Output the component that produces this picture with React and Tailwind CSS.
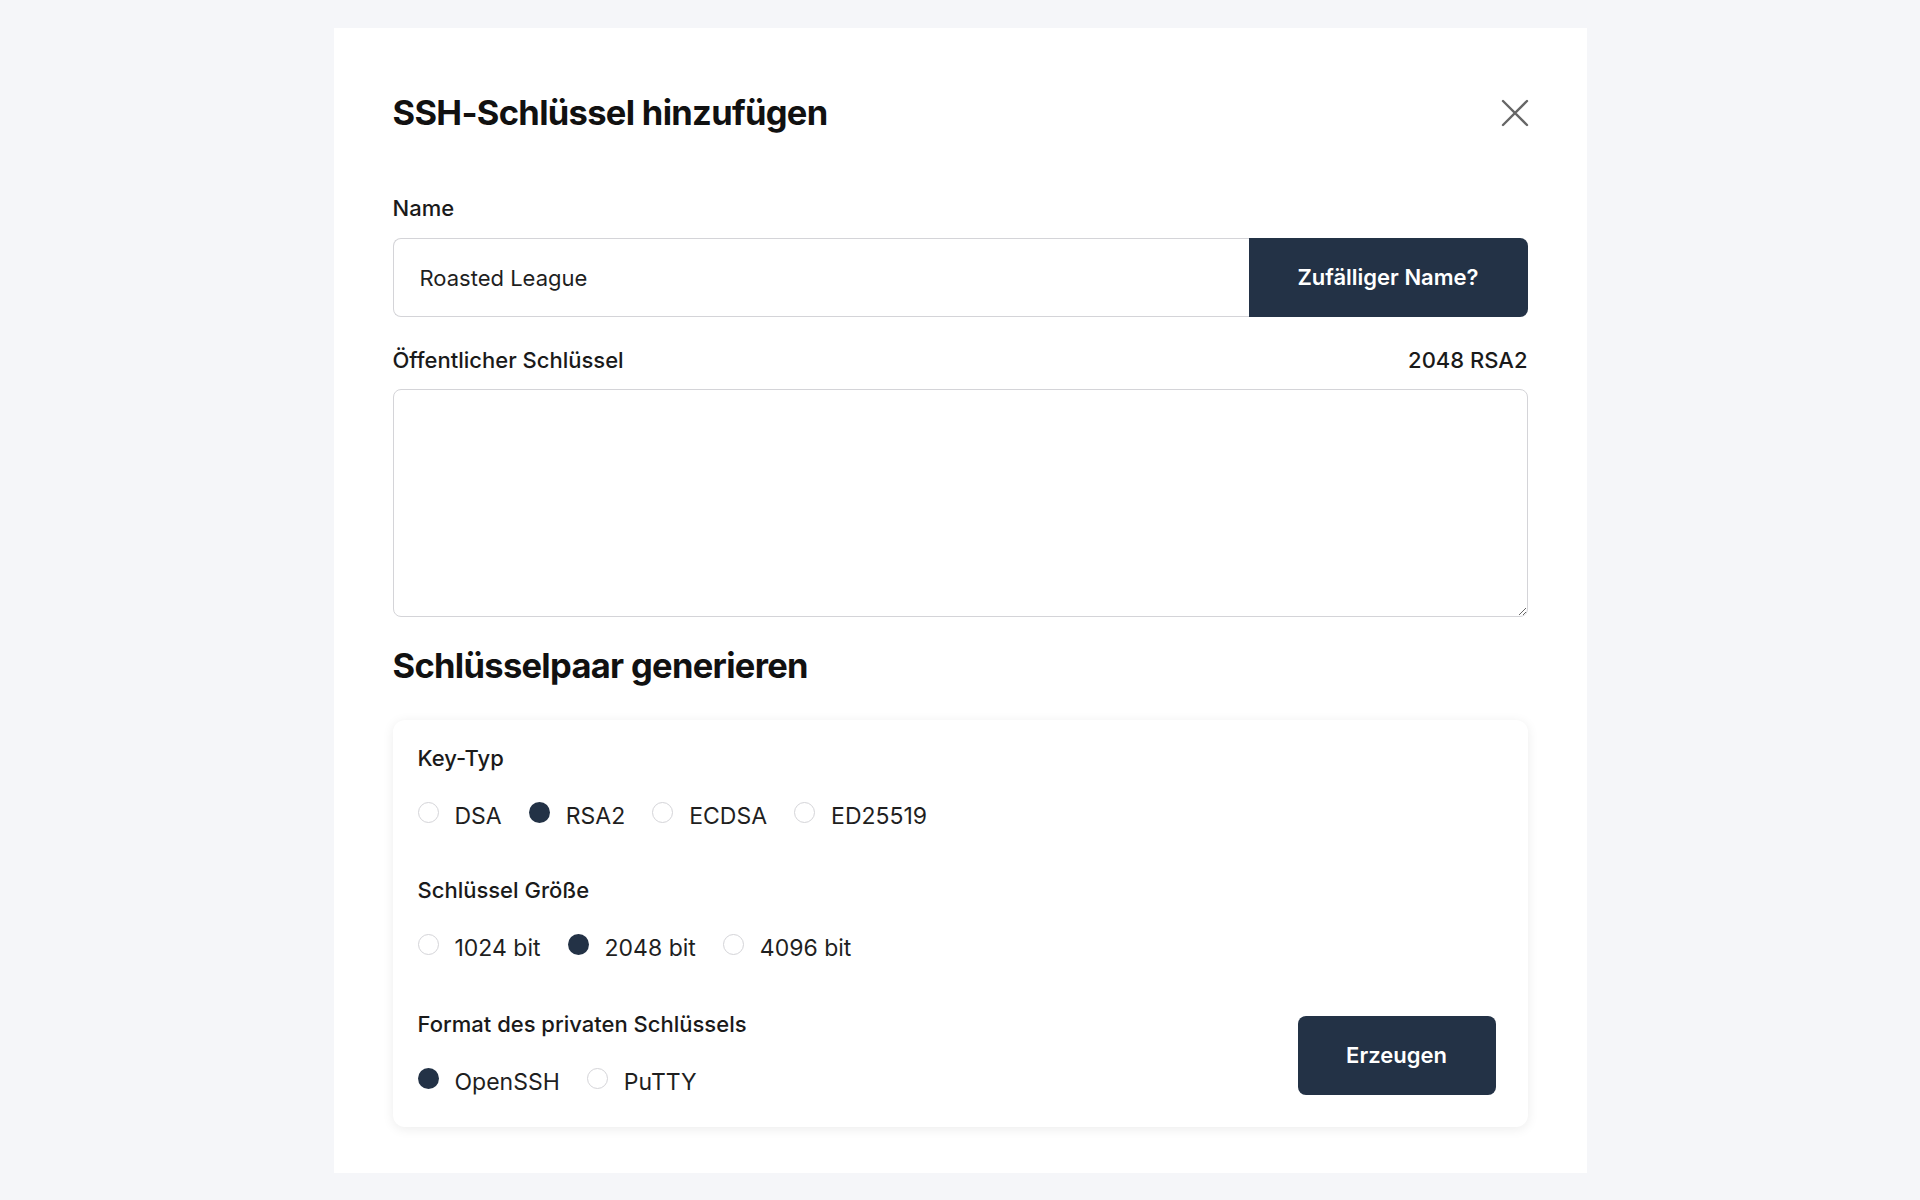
import React from "react";

function Radio({ checked, label }) {
  return (
    <label className="flex items-center">
      <span
        className={
          checked
            ? "mb-[8px] h-[21px] w-[21px] rounded-full bg-[#233246]"
            : "mb-[8px] h-[21px] w-[21px] rounded-full border border-[#d4d4d8] bg-white"
        }
      />
      <span className="ml-[16px] text-[23px] leading-[30px] text-[#1f1f1f]">{label}</span>
    </label>
  );
}

function RadioRow({ items }) {
  return (
    <div className="mt-[28px] flex items-center gap-[27px]">
      {items.map((it) => (
        <Radio key={it.label} label={it.label} checked={it.checked} />
      ))}
    </div>
  );
}

export default function App() {
  return (
    <div
      className="flex min-h-screen justify-center bg-[#f5f6f9] py-[28px]"
      style={{ fontFamily: "Inter, 'Noto Sans', sans-serif" }}
    >
      <div className="w-[1253px] bg-white px-[59px] pt-[64px] pb-[46px]">
        <div className="flex items-center justify-between">
          <h1 className="text-[34.5px] font-bold leading-[42px] tracking-[-0.02em] text-[#111111]">
            SSH-Schlüssel hinzufügen
          </h1>
          <button className="mr-[-1px] text-[#666666]" aria-label="close">
            <svg width="28" height="28" viewBox="0 0 28 28" fill="none" stroke="currentColor" strokeWidth="2.4" strokeLinecap="round">
              <path d="M2 2 L26 26 M26 2 L2 26" />
            </svg>
          </button>
        </div>

        <div className="mt-[59px] text-[22px] font-medium leading-[30px] text-[#1a1a1a]">Name</div>
        <div className="mt-[15px] flex h-[79px]">
          <input
            className="h-full flex-1 rounded-l-[8px] border border-r-0 border-[#d4d4d8] px-[26px] text-[22px] text-[#1f1f1f] outline-none"
            defaultValue="Roasted League"
          />
          <button className="h-full w-[279px] rounded-r-[8px] bg-[#233246] text-[22px] font-semibold text-white">
            Zufälliger Name?
          </button>
        </div>

        <div className="mt-[28px] flex items-center justify-between text-[22px] font-medium leading-[30px] text-[#1a1a1a]">
          <span>Öffentlicher Schlüssel</span>
          <span>2048 RSA2</span>
        </div>
        <textarea className="mt-[14px] block h-[228px] w-full rounded-[8px] border border-[#d4d4d8] p-[20px] text-[22px] outline-none" />

        <h2 className="mt-[28px] text-[34.5px] font-bold leading-[42px] tracking-[-0.02em] text-[#111111]">
          Schlüsselpaar generieren
        </h2>

        <div className="mt-[33px] rounded-[12px] bg-white pt-[23px] pr-[32px] pb-[30px] pl-[25px] shadow-[0_2px_12px_rgba(0,0,0,0.08)]">
          <div className="text-[22px] font-medium leading-[30px] text-[#1a1a1a]">Key-Typ</div>
          <RadioRow
            items={[
              { label: "DSA" },
              { label: "RSA2", checked: true },
              { label: "ECDSA" },
              { label: "ED25519" },
            ]}
          />

          <div className="mt-[44px] text-[22px] font-medium leading-[30px] text-[#1a1a1a]">Schlüssel Größe</div>
          <RadioRow
            items={[
              { label: "1024 bit" },
              { label: "2048 bit", checked: true },
              { label: "4096 bit" },
            ]}
          />

          <div className="mt-[46px] flex items-center justify-between">
            <div>
              <div className="text-[22px] font-medium leading-[30px] text-[#1a1a1a]">Format des privaten Schlüssels</div>
              <RadioRow items={[{ label: "OpenSSH", checked: true }, { label: "PuTTY" }]} />
            </div>
            <button className="mt-[4px] h-[79px] w-[198px] rounded-[8px] bg-[#233246] text-[22px] font-semibold text-white">
              Erzeugen
            </button>
          </div>
        </div>
      </div>
    </div>
  );
}
